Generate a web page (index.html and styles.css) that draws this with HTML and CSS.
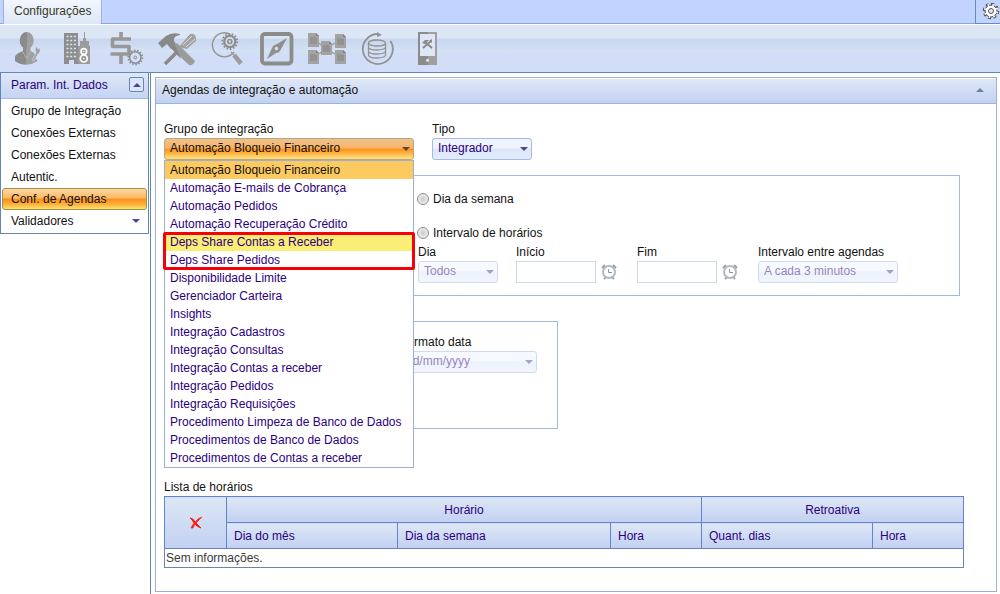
FILE: index.html
```html
<!DOCTYPE html>
<html lang="pt-BR">
<head>
<meta charset="utf-8">
<title>Configurações</title>
<link rel="stylesheet" href="styles.css">
</head>
<body>
<svg class="defs" aria-hidden="true">
  <defs>
    <linearGradient id="metal" x1="0" x2="1" y1="0" y2="0"><stop offset=".5" stop-color="#8b8b8b"/><stop offset=".5" stop-color="#9f9f9f"/></linearGradient>
    <symbol id="alarm" viewBox="0 0 16 16">
      <path d="M1 4 4 1M15 4 12 1M3 15l2-2M13 15l-2-2" stroke="#9ba3aa" stroke-width="2" fill="none"/>
      <circle cx="8" cy="8" r="6" fill="#fff" stroke="#b1bac3" stroke-width="2"/>
      <path d="M7.500 5v3.500H11" stroke="#8b959e" fill="none"/>
    </symbol>
    <symbol id="doc" viewBox="0 0 11 14">
      <path d="M0 0h8l3 3v11H0z" fill="#a3a3a2"/><path d="M2 4h5v1h2v6H2z" fill="#929392"/><path d="M8 0v3h3" fill="#808080"/>
    </symbol>
  </defs>
</svg>

<header class="tabs">
  <button class="tab" type="button">Configurações</button>
  <button class="settings" type="button" aria-label="Ajustes">
    <svg width="18" height="18" viewBox="0 0 18 18"><circle cx="9" cy="9" r="6.700" fill="none" stroke="#444" stroke-width="3" stroke-dasharray="2.800 2.462"/><circle cx="9" cy="9" r="6" fill="#fff" stroke="#444"/><circle cx="9" cy="9" r="6.300" fill="none" stroke="#fff" stroke-width="2" stroke-dasharray="1.600 3.348" stroke-dashoffset="-.6"/><circle cx="9" cy="9" r="2.500" fill="#dce6ff" stroke="#555"/></svg>
  </button>
</header>

<nav class="toolbar" aria-label="Ferramentas">
  <button type="button" aria-label="Usuários"><svg viewBox="0 0 34 34">
    <path d="M13 14h7.500v5q6 2 5 7l2 3q-5 3.500-11 3.800Q9 32.500 5 29v-4q0-3 8-6z" fill="url(#metal)"/>
    <ellipse cx="16.700" cy="8.500" rx="7" ry="8.500" fill="url(#metal)"/>
    <path d="m12.500 19.500 4.200 7 4.200-7" fill="none" stroke="#b5bac2" stroke-width=".8"/>
    <path d="m22 28 4-7-1-4 2-3 1 3 2-1v4l-2 2-4 7z" fill="#a0a1a3" stroke="#d5e0f1" stroke-width=".6"/>
  </svg></button>
  <button type="button" aria-label="Empresas"><svg viewBox="0 0 34 34">
    <path d="M4 1h14v31h-4v-4h-5v4H4z" fill="#8e8e8e"/>
    <path d="M18 14h2V9h3V6h1V0h1v6h1v3h3v5h1v18H18z" fill="#9b9b9b"/>
    <path d="M6.500 4.500h10M6.500 8.500h10M6.500 12.500h10M6.500 16.500h10M6.500 20.500h10M6.500 24.500h10" stroke="#dce5f2" stroke-width="1.500" stroke-dasharray="2 1.700" fill="none"/>
    <circle cx="23.800" cy="19.500" r="2.800" fill="none" stroke="#fff" stroke-width="1.700"/><circle cx="23.800" cy="26.500" r="3.500" fill="none" stroke="#fff" stroke-width="1.700"/><circle cx="23.800" cy="19.500" r=".7" fill="#fff"/><circle cx="23.800" cy="26.500" r=".8" fill="#fff"/>
  </svg></button>
  <button type="button" aria-label="Financeiro"><svg viewBox="0 0 34 34">
    <path d="M11 0v7M11 22v10M21 7H2.500v7.500H19V22H.5" fill="none" stroke="#989898" stroke-width="3.600" stroke-linejoin="round"/>
    <circle cx="25.300" cy="25.500" r="5.700" fill="none" stroke="#8c8c8c" stroke-width="1.500"/><circle cx="25.300" cy="25.500" r="7" fill="none" stroke="#8c8c8c" stroke-width="1.800" stroke-dasharray="1.500 1.640"/><circle cx="25.300" cy="25.500" r="1.400" fill="none" stroke="#8c8c8c"/>
  </svg></button>
  <button type="button" aria-label="Manutenção"><svg class="wide" viewBox="0 0 40 34">
    <path d="M8 32l12-12" stroke="#8a8a8a" stroke-width="3.500" fill="none"/>
    <path d="M22 15 33 2q5-1 6 4v3l-9 8z" fill="#a2a2a2"/><path d="m26 13 9-9M29 15l9-8" stroke="#d5dfef" stroke-width="1" fill="none"/>
    <path d="M1 11 9 4q6-4 14-2v1q-7 1-6 6l2 3-5 5-4-5-5 4z" fill="#898989"/>
    <path d="m14 16 6-5 18 18q-2 5-6 4z" fill="#9b9b9b"/><path d="m14 16 4-3 6 14z" fill="#858585"/>
  </svg></button>
  <button type="button" aria-label="Pesquisa"><svg viewBox="0 0 34 34">
    <path d="M20.500 2.500A12 12 0 1 0 24 20" fill="none" stroke="#939393" stroke-width="1.400"/>
    <circle cx="19.800" cy="9.500" r="5.600" fill="none" stroke="#8d8d8d" stroke-width="2.200"/><circle cx="19.800" cy="9.500" r="7.500" fill="none" stroke="#8d8d8d" stroke-width="1.800" stroke-dasharray="1.600 1.766"/><circle cx="19.800" cy="9.500" r="2" fill="none" stroke="#8d8d8d" stroke-width="1.500"/>
    <path d="m21 20 3 3" stroke="#999" stroke-width="1.500"/><path d="m24 23 7 8.500" stroke="#9c9c9c" stroke-width="4.500"/>
  </svg></button>
  <button type="button" aria-label="Navegação"><svg viewBox="0 0 34 34">
    <rect x="2" y="2" width="29.500" height="29.500" rx="3" fill="none" stroke="#8c8c89" stroke-width="3.800"/>
    <path d="M27 6 20 19q-1 2-4 2L7 27l5-11q1-3 5-4z" fill="#8f8f8d"/><circle cx="16.500" cy="16.500" r="1.800" fill="#d5e0f1"/>
  </svg></button>
  <button type="button" aria-label="Integrações"><svg class="wide" viewBox="0 0 40 34">
    <path d="m10 10 9 6 11-6M10 23l9-6 11 6" fill="none" stroke="#999" stroke-width="1.400"/>
    <use href="#doc" x="1" y="1" width="11" height="14"/><use href="#doc" x="28" y="2" width="11" height="14"/><use href="#doc" x="14" y="9" width="11" height="14"/><use href="#doc" x="1" y="18" width="11" height="14"/><use href="#doc" x="28" y="18" width="11" height="14"/>
  </svg></button>
  <button type="button" aria-label="Banco de dados"><svg viewBox="0 0 34 34">
    <path d="M18 2A15 15 0 1 0 30.500 9" fill="none" stroke="#929292" stroke-width="1.800"/><path d="m17 0 5 3-5 2z" fill="#929292"/>
    <path d="M8.500 11v12c0 4 17 4 17 0V11M8.500 15c0 4 17 4 17 0M8.500 19c0 4 17 4 17 0" fill="none" stroke="#929292" stroke-width="1.300"/><ellipse cx="17" cy="11" rx="8.500" ry="3" fill="none" stroke="#929292" stroke-width="1.300"/>
  </svg></button>
  <button type="button" aria-label="Dispositivos"><svg viewBox="0 0 34 34">
    <path d="M8 0h19v33H8z" fill="url(#metal)"/><path d="M10 2h15v22H10z" fill="#dce6f4"/><circle cx="17.500" cy="28.300" r="1.500" fill="#e4ebf6"/>
    <path d="m13 16 8-7M15 10l7 6" stroke="#898989" stroke-width="1.800" fill="none"/><path d="m12 11 3-3h4l-4 4zM19 9l3-2v4z" fill="#898989"/>
  </svg></button>
</nav>

<div class="layout">
  <aside class="sidebar">
    <div class="menu">
      <div class="menu-head"><span>Param. Int. Dados</span><button class="fold" type="button" aria-label="Recolher"><i class="up"></i></button></div>
      <div class="menu-items">
        <a href="#">Grupo de Integração</a>
        <a href="#">Conexões Externas</a>
        <a href="#">Conexões Externas</a>
        <a href="#">Autentic.</a>
        <a href="#" class="active">Conf. de Agendas</a>
        <a href="#">Validadores<i class="down"></i></a>
      </div>
    </div>
  </aside>

  <main class="main">
    <section class="panel">
      <div class="panel-head"><span>Agendas de integração e automação</span><button class="collapse" type="button" aria-label="Recolher painel"><i class="up gray"></i></button></div>
      <form class="panel-body">
        <div class="row">
          <div class="field group">
            <label for="grupo">Grupo de integração</label>
            <span class="select hot"><select id="grupo"><option>Automação Bloqueio Financeiro</option></select><i class="down"></i></span>
            <ul class="options" role="listbox" aria-label="Grupo de integração">
              <li class="chosen" role="option">Automação Bloqueio Financeiro</li>
              <li role="option">Automação E-mails de Cobrança</li>
              <li role="option">Automação Pedidos</li>
              <li role="option">Automação Recuperação Crédito</li>
              <li class="hover" role="option">Deps Share Contas a Receber</li>
              <li role="option">Deps Share Pedidos</li>
              <li role="option">Disponibilidade Limite</li>
              <li role="option">Gerenciador Carteira</li>
              <li role="option">Insights</li>
              <li role="option">Integração Cadastros</li>
              <li role="option">Integração Consultas</li>
              <li role="option">Integração Contas a receber</li>
              <li role="option">Integração Pedidos</li>
              <li role="option">Integração Requisições</li>
              <li role="option">Procedimento Limpeza de Banco de Dados</li>
              <li role="option">Procedimentos de Banco de Dados</li>
              <li role="option">Procedimentos de Contas a receber</li>
              <li class="marker" role="presentation"></li>
            </ul>
          </div>
          <div class="field type">
            <label for="tipo">Tipo</label>
            <span class="select"><select id="tipo"><option>Integrador</option></select><i class="down"></i></span>
          </div>
        </div>

        <div class="box schedule">
          <label class="radio"><input type="radio" name="modo">Dia da semana</label>
          <label class="radio"><input type="radio" name="modo">Intervalo de horários</label>
          <div class="row times">
            <div class="field day"><label for="dia">Dia</label><span class="select off"><select id="dia" disabled><option>Todos</option></select><i class="down"></i></span></div>
            <div class="field"><label for="inicio">Início</label><span class="time"><input id="inicio" type="text" disabled><svg width="16" height="16"><use href="#alarm"/></svg></span></div>
            <div class="field"><label for="fim">Fim</label><span class="time"><input id="fim" type="text" disabled><svg width="16" height="16"><use href="#alarm"/></svg></span></div>
            <div class="field every"><label for="cada">Intervalo entre agendas</label><span class="select off"><select id="cada" disabled><option>A cada 3 minutos</option></select><i class="down"></i></span></div>
          </div>
        </div>

        <div class="box format">
          <div class="field"><label for="formato">Formato data</label><span class="select off"><select id="formato" disabled><option>dd/mm/yyyy</option></select><i class="down"></i></span></div>
        </div>

        <table class="list">
          <caption>Lista de horários</caption>
          <colgroup><col class="c-del"><col class="c-day"><col class="c-week"><col class="c-hour"><col class="c-day"><col class="c-hour"></colgroup>
          <thead>
            <tr><th rowspan="2" class="mid"><button class="delete" type="button" aria-label="Excluir"><svg width="14" height="14" viewBox="0 0 14 14"><path d="M1 2q3 0 5 4 3 3 6 6-4-1-7-5Q3 3 1 2z" fill="#f01818" stroke="#f01818"/><path d="M13 1Q9 2 6 6q-3 3-4 6l2 0q2-5 5-7 2-2 4-4z" fill="#ff1f10" stroke="#ff2412" stroke-width=".7"/></svg></button></th><th colspan="3" class="mid">Horário</th><th colspan="2" class="mid">Retroativa</th></tr>
            <tr><th>Dia do mês</th><th>Dia da semana</th><th>Hora</th><th>Quant. dias</th><th>Hora</th></tr>
          </thead>
          <tbody><tr><td colspan="6">Sem informações.</td></tr></tbody>
        </table>
      </form>
    </section>
  </main>
</div>
</body>
</html>
```
FILE: styles.css
```css
* { box-sizing: border-box; }
body {
  margin: 0;
  min-height: 100vh;
  display: flex;
  flex-direction: column;
  background: #fff;
  color: #111;
  font: 12px/18px "Liberation Sans", Arial, sans-serif;
}
button, input, select { font: inherit; color: inherit; margin: 0; }
button { padding: 0; border: 0; background: none; }
.defs { position: absolute; width: 0; height: 0; }

/* Arrow glyphs */
.up, .down { width: 0; height: 0; border: 4px solid transparent; }
.up { border-top: 0; border-bottom-color: #4c4596; }
.up.gray { border-bottom-color: #7080a5; }
.down { border-bottom: 0; border-top-color: #4c4596; }

/* Tabs */
.tabs {
  display: flex;
  justify-content: space-between;
  height: 24px;
  padding-left: 3px;
  background: #c1d3ff;
  border-bottom: 1px solid #8fa8dc;
}
.tab {
  height: 24px;
  padding: 0 10px 2px;
  border: 1px solid #9db2dc;
  border-width: 0 1px;
  border-radius: 0 0 2px 0;
  background: linear-gradient(#f2f6ff, #dde7f7);
  color: #333a20;
}
.settings {
  display: flex;
  align-items: center;
  width: 25px;
  height: 24px;
  padding: 0 0 2px 6px;
  overflow: hidden;
  border: solid #6b8abf;
  border-width: 0 0 1px 1px;
}
.settings svg { flex: none; }

/* Toolbar */
.toolbar {
  display: flex;
  height: 49px;
  padding: 0 2px;
  border-top: 1px solid #fff;
  border-bottom: 1px solid #6386ba;
  background: linear-gradient(#dce6f4 0 28%, #c8d6ef 30%, #d3e2f3 57%, #d2def7 60%);
}
.toolbar button { display: flex; align-items: center; justify-content: center; width: 50px; }
.toolbar svg { width: 34px; height: 34px; }
.toolbar .wide { width: 40px; }

/* Sidebar */
.layout { display: flex; flex: 1; }
.sidebar { flex: none; width: 151px; border-right: 1px solid #6386ba; }
.menu { margin-right: 1px; border: 1px solid #6386ba; border-top: 0; }
.menu-head {
  display: flex;
  align-items: center;
  justify-content: space-between;
  height: 26px;
  padding: 0 4px 2px 10px;
  border-bottom: 1px solid #a3b9df;
  background: linear-gradient(#dfe8f6, #c5d4f3);
  color: #2b0080;
}
.fold {
  display: flex;
  align-items: center;
  justify-content: center;
  width: 15px;
  height: 15px;
  border: 1px solid #6386ba;
  border-radius: 2px;
  background: #dce6fa;
}
.menu-items { padding: 1px; }
.menu-items a {
  display: flex;
  align-items: center;
  justify-content: space-between;
  height: 22px;
  padding: 0 7px 0 9px;
  color: #111;
  text-decoration: none;
}
.menu-items .active {
  padding-left: 8px;
  border: 1px solid #a29344;
  border-radius: 3px;
  background: linear-gradient(#fcd9a4, #fdb967 45%, #fb8f16 50%, #fcae3c 75%, #ffe069);
}

/* Panel */
.main { flex: 1; padding: 4px 3px 2px 4px; }
.panel { height: 100%; border: 1px solid #9aafd3; }
.panel-head {
  display: flex;
  align-items: center;
  justify-content: space-between;
  height: 26px;
  padding: 0 12px 2px 6px;
  border-top: 1px solid #fff;
  border-bottom: 1px solid #9db3df;
  background: linear-gradient(#dee7f5, #c3d2f3);
}
.collapse { display: flex; }
.panel-body { padding: 16px 32px 22px 8px; }
.row { display: flex; }
.field { display: flex; flex-direction: column; }
.group { position: relative; width: 250px; margin-right: 18px; }
.type { width: 100px; }

/* Form controls */
.select { position: relative; display: block; height: 22px; }
.select select {
  appearance: none;
  display: block;
  width: 100%;
  height: 22px;
  padding: 0 18px 2px 5px;
  border: 1px solid #a3b9e6;
  border-radius: 3px;
  background: linear-gradient(#eff4fe 45%, #dbe6fa 50%, #e3edfe);
  color: #2b0080;
}
.select .down { position: absolute; right: 4px; top: 9px; pointer-events: none; }
.hot select {
  border-color: #b5a889;
  background: linear-gradient(#efc08a, #f7b56a 46%, #ff8f12 50%, #ffe482);
  color: #111;
}
.hot .down { border-top-color: #5b4630; }
.off { opacity: .5; }
.off select:disabled { color: #2b0080; opacity: 1; }

.options {
  position: absolute;
  z-index: 1;
  top: 40px;
  left: 0;
  width: 100%;
  margin: 0;
  padding: 0;
  list-style: none;
  border: 1px solid #9aafd3;
  background: #fff;
  color: #2b0080;
}
.options li { padding: 0 5px; height: 18px; white-space: nowrap; }
.options .chosen { background: #fdca5f; color: #111; }
.options .hover { background: #faee74; }
.options .marker {
  position: absolute;
  top: 71px;
  left: -2px;
  right: -2px;
  height: 38px;
  border: 3px solid #f8000b;
  border-radius: 2px;
}

.box { border: 1px solid #9ebbdc; }
.schedule { margin: 15px 4px 0 0; padding: 14px 0 12px 253px; }
.radio { display: flex; align-items: center; height: 18px; margin-bottom: 16px; }
.radio input {
  appearance: none;
  width: 12px;
  height: 12px;
  margin: 0 4px 0 -1px;
  border: 1px solid #8b8b8b;
  border-radius: 50%;
  background: radial-gradient(#c9c9c9, #eee 70%);
}
.radio + .radio { margin-bottom: 1px; }
.times { gap: 18px; }
.day { width: 80px; }
.times .every { width: 140px; }
.time { display: flex; align-items: center; gap: 5px; width: 103px; }
.time input {
  width: 80px;
  height: 22px;
  border: 1px solid #cbdaf0;
  background: #fff;
}
.format { width: 394px; height: 108px; margin-top: 25px; padding: 11px 20px 0 235px; }

/* Schedule list */
.list { width: 100%; margin-top: 49px; border-collapse: collapse; table-layout: fixed; }
.list caption { text-align: left; }
.list th, .list td { border: 1px solid #6683ca; padding: 0 7px; text-align: left; font-weight: normal; }
.list th { height: 26px; background: linear-gradient(#dde7f4, #c2d1f3); color: #2b0080; }
.list .mid { text-align: center; }
.list td { height: 19px; padding: 0 1px; border-color: #6b84b0; color: #3a3a3a; }
.c-del { width: 62px; }
.c-day { width: 171px; }
.c-week { width: 213px; }
.c-hour { width: 91px; }
.delete { display: inline-block; vertical-align: middle; height: 14px; }
.delete svg { display: block; }
```
